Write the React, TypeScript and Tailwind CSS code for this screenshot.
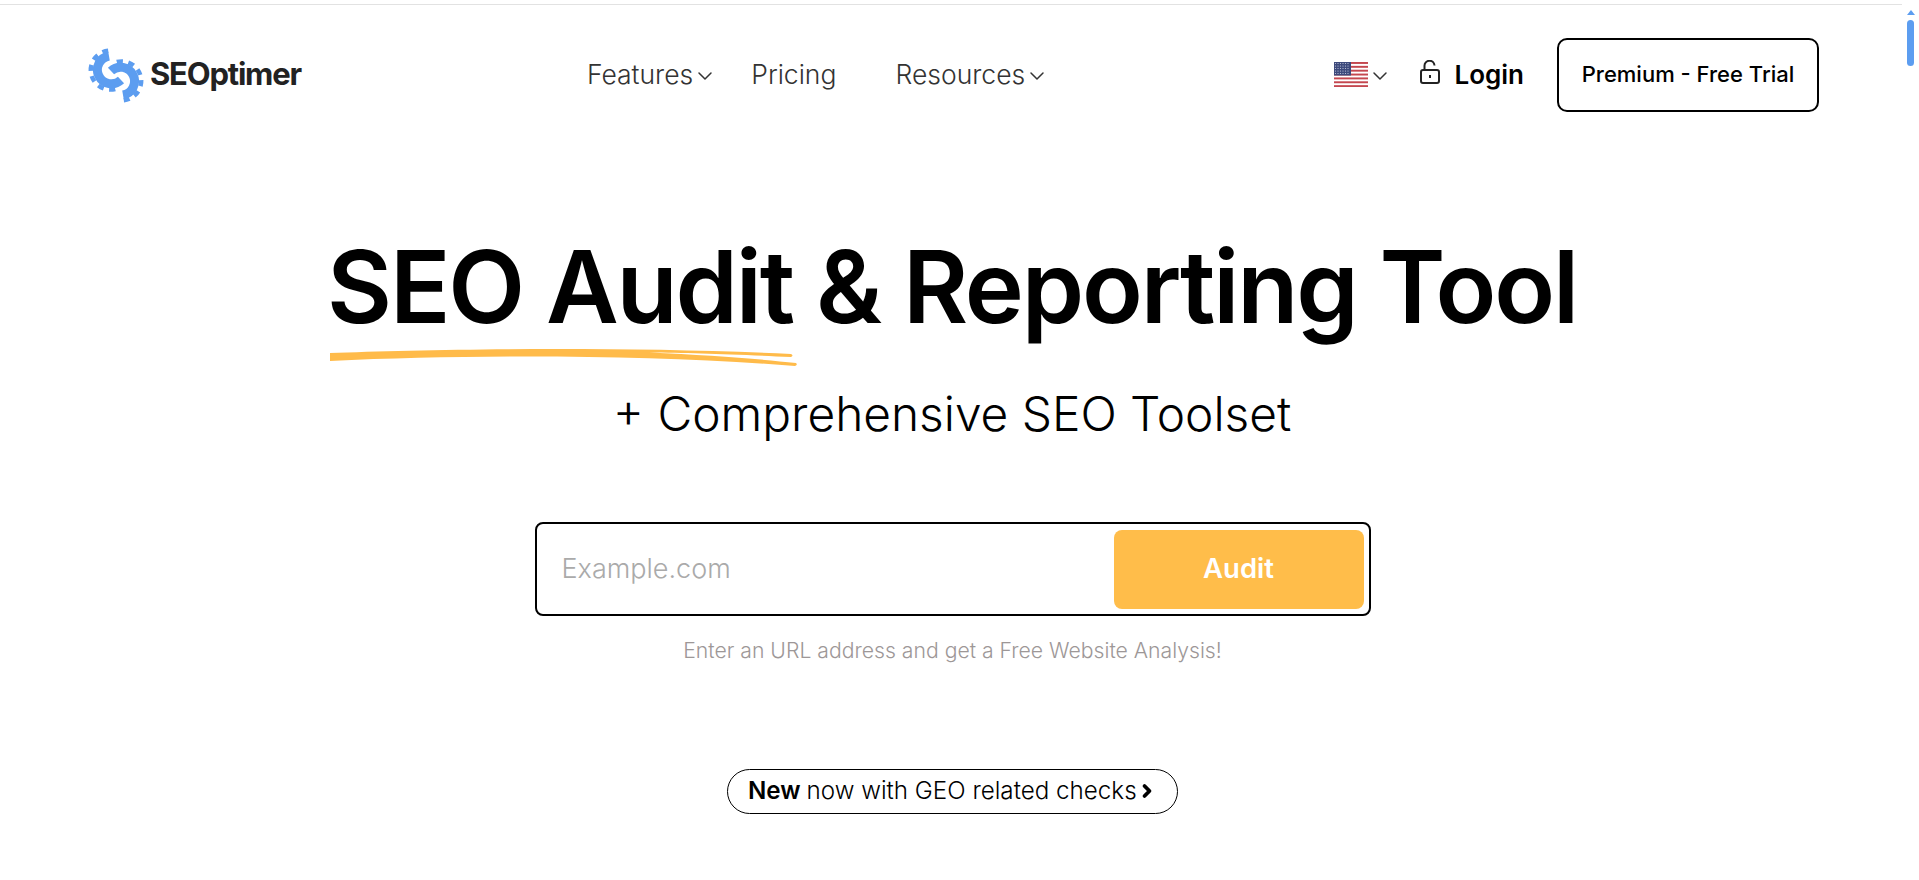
import React from "react";
import { ChevronDown, ChevronRight } from "lucide-react";

const Logo = () => (
  <svg width="56" height="60" viewBox="0 0 56 60" fill="none" className="shrink-0">
    <g stroke="#5c9df0">
      <path d="M21 11 A14 14 0 1 0 33 35" strokeWidth="9" />
      <path d="M20.2 5.7 A19.5 19.5 0 1 0 30 43" strokeWidth="4.5" strokeDasharray="6 5.5" />
      <path d="M35 50 A14 14 0 1 0 23 26" strokeWidth="9" />
      <path d="M35.8 55.3 A19.5 19.5 0 1 0 26 18" strokeWidth="4.5" strokeDasharray="6 5.5" />
    </g>
  </svg>
);

const Flag = () => (
  <svg width="34" height="25" viewBox="0 0 34 25" className="shrink-0">
    <rect width="34" height="25" fill="#fff" />
    {[0, 1, 2, 3, 4, 5, 6].map((i) => (
      <rect key={i} y={i * 3.86} width="34" height="1.93" fill="#c4474f" />
    ))}
    <rect width="17" height="13.5" fill="#3d4a7c" />
    {[1.5, 4, 6.5, 9, 11.5].map((y) =>
      [1.5, 4, 6.5, 9, 11.5, 14].map((x) => (
        <circle key={`${x}-${y}`} cx={x} cy={y} r="0.6" fill="#c9cde0" />
      ))
    )}
  </svg>
);

const Lock = () => (
  <svg width="20" height="24" viewBox="0 0 20 24" fill="none" stroke="#222" strokeWidth="2" className="shrink-0">
    <rect x="1" y="10" width="18" height="13" rx="2" />
    <path d="M4.5 10V6a5 5 0 0 1 10-.5" />
    <path d="M10 15v3" />
  </svg>
);

export default function App() {
  return (
    <div className="flex h-[880px] w-full overflow-hidden bg-white font-['Inter','Liberation_Sans',sans-serif] text-black">
      <div className="flex min-w-0 flex-1 flex-col">
        <div className="mt-1 h-px bg-[#e2e2e2]" />
        <header className="flex h-[139px] items-center pl-[88px] pr-[83px]">
          <div className="flex items-center gap-[6px]">
            <Logo />
            <span className="text-[31px] font-bold tracking-[-1.2px] text-[#222]">SEOptimer</span>
          </div>
          <nav className="ml-[286px] flex items-center text-[#333] text-[26.5px] font-light">
            <span>Features</span>
            <ChevronDown size={24} strokeWidth={1.5} className="mt-[3px]" />
            <span className="ml-[34px]">Pricing</span>
            <span className="ml-[59px]">Resources</span>
            <ChevronDown size={24} strokeWidth={1.5} className="mt-[3px]" />
          </nav>
          <div className="ml-auto flex items-center">
            <Flag />
            <ChevronDown size={24} strokeWidth={1.5} className="mt-[3px] text-[#333]" />
            <div className="mb-[5px] ml-[28px]"><Lock /></div>
            <span className="ml-[14px] text-[26px] font-semibold">Login</span>
            <button className="ml-[33px] flex h-[74px] w-[262px] items-center justify-center rounded-[10px] border-2 border-black text-[22px] font-medium">
              Premium - Free Trial
            </button>
          </div>
        </header>
        <main className="flex flex-col items-center pl-[3px]">
          <h1 className="relative ml-[-1px] mt-[88px] text-[100px] font-semibold leading-[110px] tracking-[-2.18px] whitespace-nowrap">
            SEO Audit &amp; Reporting Tool
            <svg width="470" height="22" viewBox="0 0 470 22" fill="#ffbb4a" className="absolute left-[2px] top-[113px]">
              <path d="M1 8 C100 4 300 1 462 9 Q465 10.5 462 12 C400 9 360 8 320 7.5 C380 10 430 14 467 18 Q469 20 466 21 C330 10 150 9 1 16 Z" />
            </svg>
          </h1>
          <h2 className="ml-[-1px] mt-[44px] text-[47.8px] font-light leading-[56px] whitespace-nowrap">+ Comprehensive SEO Toolset</h2>
          <form className="mt-[80px] flex h-[94px] w-[836px] items-center rounded-[8px] border-2 border-black pl-[25px] pr-[5px]">
            <input
              className="min-w-0 flex-1 bg-transparent text-[27px] font-light outline-none placeholder:text-[#aaaaaa]"
              placeholder="Example.com"
            />
            <button type="button" className="h-[79px] w-[250px] rounded-[8px] bg-[#ffbd4a] text-[27.5px] font-semibold text-white">
              Audit
            </button>
          </form>
          <p className="mt-[19px] text-[21.2px] font-light text-[#9d9797]">Enter an URL address and get a Free Website Analysis!</p>
          <a className="mt-[102px] flex h-[45px] w-[451px] items-center rounded-full border border-black pl-[20px] text-[24.2px] font-light">
            <b className="mr-[6px] font-semibold">New</b> now with GEO related checks
            <ChevronRight size={20} strokeWidth={4.5} />
          </a>
        </main>
      </div>
      <aside className="flex w-[17px] shrink-0 flex-col items-center pt-[10px]">
        <div className="h-0 w-0 border-x-[4px] border-b-[5px] border-x-transparent border-b-[#5c9df0]" />
        <div className="mt-[5px] h-[46px] w-[7px] rounded-full bg-[#5c9df0]" />
      </aside>
    </div>
  );
}
